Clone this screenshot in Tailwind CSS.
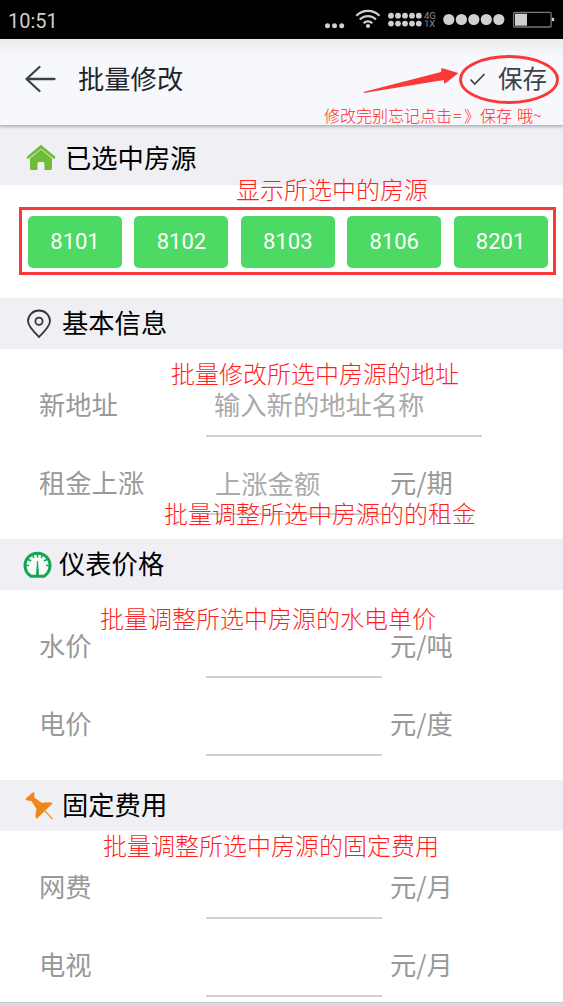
<!DOCTYPE html>
<html lang="zh-CN">
<head>
<meta charset="utf-8">
<title>批量修改</title>
<script src="https://cdn.jsdelivr.net/npm/@tailwindcss/browser@4"></script>
</head>
<body class="bg-white">
<div class="relative flex h-[1006px] w-[563px] flex-col overflow-hidden bg-white font-['Noto_Sans_CJK_SC',sans-serif] text-[26.3px] leading-none text-black">

  <!-- Status bar -->
  <div class="flex h-[39px] shrink-0 items-center justify-between bg-black pl-[8px] text-[#cfcfcf]">
    <span class="pt-[2px] font-[Roboto,sans-serif] text-[20px]">10:51</span>
    <svg class="h-[39px] w-[243px]" viewBox="0 0 243 39" fill="#cfcfcf">
      <circle cx="7.5" cy="25.8" r="2.5"/><circle cx="14.5" cy="25.8" r="2.5"/><circle cx="21.7" cy="25.8" r="2.5"/>
      <g fill="none" stroke="#cfcfcf" stroke-width="2.2">
        <path d="M36.3 15.8a16 16 0 0 1 23.2 0M39.8 19.6a11 11 0 0 1 16.2 0M43.6 23.2a6 6 0 0 1 8.6 0"/>
      </g>
      <circle cx="48" cy="26" r="2.1"/>
      <g>
        <circle cx="71" cy="15.7" r="2.9"/><circle cx="78" cy="15.7" r="2.9"/><circle cx="85" cy="15.7" r="2.9"/><circle cx="92" cy="15.7" r="2.9"/><circle cx="98.8" cy="15.7" r="2.9"/>
        <circle cx="71" cy="23.6" r="2.9"/><circle cx="78" cy="23.6" r="2.9"/><circle cx="85" cy="23.6" r="2.9"/><circle cx="92" cy="23.6" r="2.9"/><circle cx="98.8" cy="23.6" r="2.9"/>
      </g>
      <g class="font-[Roboto,sans-serif] text-[9.5px]" fill="#8a8a8a"><text x="104" y="18.800">4G</text><text x="104" y="26.800">1X</text></g>
      <circle cx="128.8" cy="19.5" r="5.6"/><circle cx="141.4" cy="19.5" r="5.6"/><circle cx="153.8" cy="19.5" r="5.6"/><circle cx="166.3" cy="19.5" r="5.6"/><circle cx="178.8" cy="19.5" r="5.6"/>
      <rect x="193.6" y="12.4" width="37.5" height="14.6" rx="1" fill="none" stroke="#777" stroke-width="1.3"/>
      <rect x="195" y="13.7" width="12" height="12"/>
      <rect x="231.8" y="17.8" width="2.4" height="3.4" rx="1"/>
    </svg>
  </div>

  <!-- Title bar -->
  <div class="z-10 flex h-[87px] shrink-0 items-center border-b border-[#b9babc] bg-linear-to-b from-[#ececf0] via-[#f7f8fc] via-20% to-[#f7f8fc] pr-[16px] pb-[7px] pl-[24px] text-[#22262a] shadow-[0_1px_3px_rgba(0,0,0,0.25)]">
    <svg class="h-[28px] w-[32px]" viewBox="0 0 32 28" fill="none" stroke="#3c4347" stroke-width="2.3" stroke-linecap="round" stroke-linejoin="round"><path d="M30.5 14H2.5M15.500 2L2.500 14L15.500 26"/></svg>
    <span class="ml-[22px]">批量修改</span>
    <svg class="ml-auto h-[14px] w-[17px]" viewBox="0 0 17 14" fill="none" stroke="#3c4347" stroke-width="1.7"><path d="M1.5 7.5L5.8 12L15.5 2"/></svg>
    <span class="ml-[12px] text-[24.5px] text-[#3c4347]">保存</span>
  </div>

  <!-- Selected rooms -->
  <div class="flex h-[59px] shrink-0 items-center bg-[#efeff4] pt-[4px] pl-[26px]">
    <svg class="h-[27px] w-[30px]" viewBox="0 0 30 27" fill="#71bc37"><path d="M15 .8L1 12.500Q.2 13.500 1.200 14.400Q2 15 3 14.300L15 4.700L27 14.300Q28 15 28.800 14.400Q29.800 13.500 29 12.500Z"/><path d="M15 5.600L4 14.400V24.500Q4 26 5.500 26H11.500V19.500Q11.500 18 13 18H17Q18.500 18 18.500 19.500V26H24.500Q26 26 26 24.500V14.400Z"/></svg>
    <span class="ml-[9px]">已选中房源</span>
  </div>
  <div class="flex h-[113px] shrink-0 gap-[12.4px] pt-[31px] pl-[28px] font-[Roboto,'Noto_Sans_CJK_SC',sans-serif] text-[22px] text-white">
    <div class="flex h-[52px] w-[94px] items-center justify-center rounded-[5px] bg-[#4cd964]">8101</div>
    <div class="flex h-[52px] w-[94px] items-center justify-center rounded-[5px] bg-[#4cd964]">8102</div>
    <div class="flex h-[52px] w-[94px] items-center justify-center rounded-[5px] bg-[#4cd964]">8103</div>
    <div class="flex h-[52px] w-[94px] items-center justify-center rounded-[5px] bg-[#4cd964]">8106</div>
    <div class="flex h-[52px] w-[94px] items-center justify-center rounded-[5px] bg-[#4cd964]">8201</div>
  </div>

  <!-- Basic info -->
  <div class="flex h-[51px] shrink-0 items-center bg-[#efeff4] pl-[26px]">
    <svg class="h-[30px] w-[26px]" viewBox="0 0 26 30" fill="none" stroke="#30363a" stroke-width="1.8"><path d="M13 28C10.500 25.500 2 17.500 2 12A11 10.500 0 0 1 24 12C24 17.500 15.500 25.500 13 28Z" stroke-linejoin="round"/><circle cx="13" cy="12.3" r="3.6"/></svg>
    <span class="ml-[10px] pb-[2px]">基本信息</span>
  </div>
  <div class="flex h-[190px] shrink-0 flex-col pt-[16px] pl-[39px] text-[#999]">
    <div class="flex h-[78px] shrink-0 items-center"><span class="w-[167px]">新地址</span><div class="flex h-[72px] w-[276px] items-center self-start border-b-2 border-[#d0d2d2] pt-[8px] pl-[8px] text-[#aaa]">输入新的地址名称</div></div>
    <div class="flex h-[78px] shrink-0 items-center"><span class="w-[167px]">租金上涨</span><div class="flex h-[72px] w-[176px] items-center self-start border-b-2 border-[#d0d1d6] pt-[10px] pl-[9px] text-[#aaa]">上涨金额</div><span class="ml-[8px]">元/期</span></div>
  </div>

  <!-- Meter prices -->
  <div class="flex h-[51px] shrink-0 items-center bg-[#efeff4] pl-[23px]">
    <svg class="h-[28px] w-[29px]" viewBox="0 0 29 28"><path d="M8 25.300Q2 21.500 2 14.500A12.500 12.300 0 0 1 27 14.500Q27 21.500 21 25.300Z" fill="#f8fbf9" stroke="#12a653" stroke-width="3" stroke-linejoin="round"/><path d="M14.500 10L13.500 25H15.500Z" fill="#12a653" stroke="#12a653"/><path d="M14.500 3V6.500M9.500 3.500L10.800 7M19.500 3.500L18.200 7M4.500 8L8 10M24.500 8L21 10M3 14.500H6M23 14.500H26" stroke="#12a653" stroke-width="1.6"/></svg>
    <span class="ml-[7px] pb-[2px]">仪表价格</span>
  </div>
  <div class="flex h-[190px] shrink-0 flex-col pt-[16px] pl-[39px] text-[#999]">
    <div class="flex h-[78px] shrink-0 items-center"><span class="w-[167px]">水价</span><div class="h-[72px] w-[176px] self-start border-b-2 border-[#d0d2d2]"></div><span class="ml-[8px]">元/吨</span></div>
    <div class="flex h-[78px] shrink-0 items-center"><span class="w-[167px]">电价</span><div class="h-[72px] w-[176px] self-start border-b-2 border-[#d0d2d2]"></div><span class="ml-[8px]">元/度</span></div>
  </div>

  <!-- Fixed fees -->
  <div class="flex h-[51px] shrink-0 items-center bg-[#efeff4] pl-[25px]">
    <svg class="h-[30px] w-[30px]" viewBox="0 0 30 30" fill="#f08519"><path d="M.8 7.500L8 1.200Q9.500 1 9.500 2.700L9.200 6.500L17 12Q20 11 26.500 11.500Q28 12 27 13L12.500 27Q11 28.300 10.800 26.500Q10 21.500 11.500 18L6.500 10L2 9.500Q0 9 .8 7.500Z"/><path d="M19 19L27.500 28" stroke="#f3a04b" stroke-width="1.7"/></svg>
    <span class="ml-[7px] pb-[2px]">固定费用</span>
  </div>
  <div class="flex h-[171px] shrink-0 flex-col pt-[16px] pl-[39px] text-[#999]">
    <div class="flex h-[78px] shrink-0 items-center"><span class="w-[167px]">网费</span><div class="h-[72px] w-[176px] self-start border-b-2 border-[#d0d1d6]"></div><span class="ml-[8px]">元/月</span></div>
    <div class="flex h-[78px] shrink-0 items-center"><span class="w-[167px]">电视</span><div class="h-[72px] w-[176px] self-start border-b-2 border-[#d0d1d6]"></div><span class="ml-[8px]">元/月</span></div>
  </div>
  <div class="h-[5px] shrink-0 border-t border-[#c8c8c8] bg-[#dadada]"></div>

  <!-- Red annotations laid over the screen -->
  <div class="absolute inset-0 z-20 text-[24px] font-light whitespace-nowrap text-[#ff1f1f]">
    <svg class="absolute inset-0 h-[130px] w-[563px]" viewBox="0 0 563 130"><ellipse cx="509" cy="79.5" rx="48.500" ry="23" fill="none" stroke="#fb3838" stroke-width="2.8"/><path d="M363.500 92L441 72L441.500 68L458.500 73L444.500 84L443.800 80L364 93Z" fill="#fb3838"/></svg>
    <span class="absolute top-[107px] left-[324px] text-[16px]">修改完别忘记点击</span>
    <span class="absolute top-[107px] left-[453px] text-[16px]">=</span>
    <span class="absolute top-[107px] left-[464px] text-[16px]">》</span>
    <span class="absolute top-[107px] left-[480px] text-[16px]">保存</span>
    <span class="absolute top-[107px] left-[517px] text-[16px]">哦~</span>
    <span class="absolute top-[177px] left-[236px]">显示所选中的房源</span>
    <div class="absolute top-[207px] left-[19px] h-[68px] w-[537px] border-3 border-[#fb3838]"></div>
    <span class="absolute top-[361px] left-[171px]">批量修改所选中房源的地址</span>
    <span class="absolute top-[501px] left-[164px]">批量调整所选中房源的的租金</span>
    <span class="absolute top-[606px] left-[100px]">批量调整所选中房源的水电单价</span>
    <span class="absolute top-[833px] left-[103px]">批量调整所选中房源的固定费用</span>
  </div>
</div>
</body>
</html>
